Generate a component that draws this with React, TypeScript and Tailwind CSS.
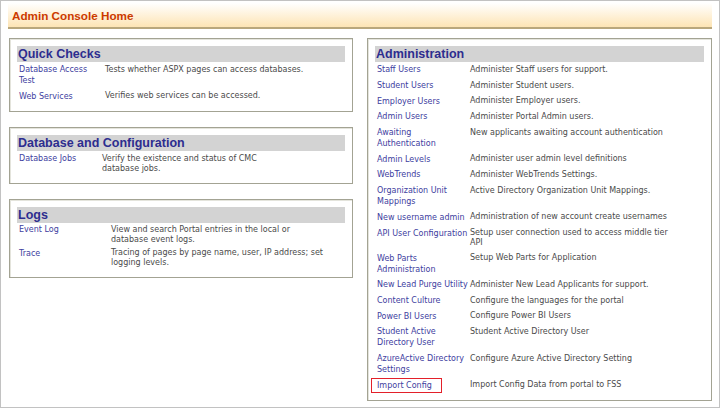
import React from "react";

type Row = { link: React.ReactNode; desc: React.ReactNode; boxed?: boolean };

const quickChecks: Row[] = [
  { link: <>Database Access<br />Test</>, desc: "Tests whether ASPX pages can access databases." },
  { link: "Web Services", desc: "Verifies web services can be accessed." },
];

const dbConfig: Row[] = [
  { link: "Database Jobs", desc: <>Verify the existence and status of CMC<br />database jobs.</> },
];

const logs: Row[] = [
  { link: "Event Log", desc: <>View and search Portal entries in the local or<br />database event logs.</> },
  { link: "Trace", desc: <>Tracing of pages by page name, user, IP address; set<br />logging levels.</> },
];

const admin: Row[] = [
  { link: "Staff Users", desc: "Administer Staff users for support." },
  { link: "Student Users", desc: "Administer Student users." },
  { link: "Employer Users", desc: "Administer Employer users." },
  { link: "Admin Users", desc: "Administer Portal Admin users." },
  { link: <>Awaiting<br />Authentication</>, desc: "New applicants awaiting account authentication" },
  { link: "Admin Levels", desc: "Administer user admin level definitions" },
  { link: "WebTrends", desc: "Administer WebTrends Settings." },
  { link: <>Organization Unit<br />Mappings</>, desc: "Active Directory Organization Unit Mappings." },
  { link: "New username admin", desc: "Administration of new account create usernames" },
  { link: "API User Configuration", desc: <>Setup user connection used to access middle tier<br />API</> },
  { link: <>Web Parts<br />Administration</>, desc: "Setup Web Parts for Application" },
  { link: "New Lead Purge Utility", desc: "Administer New Lead Applicants for support." },
  { link: "Content Culture", desc: "Configure the languages for the portal" },
  { link: "Power BI Users", desc: "Configure Power BI Users" },
  { link: <>Student Active<br />Directory User</>, desc: "Student Active Directory User" },
  { link: <>AzureActive Directory<br />Settings</>, desc: "Configure Azure Active Directory Setting" },
  { link: "Import Config", desc: "Import Config Data from portal to FSS", boxed: true },
];

function Panel({ title, rows, linkW, pad }: { title: string; rows: Row[]; linkW: string; pad: string }) {
  return (
    <div className="border border-[#a3a393] shadow-[inset_1px_1px_0_#e4e4dc] bg-white p-[7px]">
      <div className="h-[16px] bg-[#d3d3d3] pl-[1px] text-[12.5px] leading-[16px] font-bold text-[#2d2d8f] font-['Liberation_Sans',Arial,sans-serif]">
        {title}
      </div>
      <div className="font-['DejaVu_Sans',Verdana,sans-serif] text-[8px]">
        {rows.map((r, i) => (
          <div key={i} className={`flex ${pad}`}>
            <div className={`${linkW} shrink-0 pl-[2px] leading-[11px] text-[#4040a0] whitespace-nowrap`}>
              {r.boxed ? (
                <span className="inline-block -ml-[6px] -my-[2px] border border-[#e3202a] pl-[5px] pr-[9px] py-[1px]">{r.link}</span>
              ) : (
                r.link
              )}
            </div>
            <div className="leading-[10px] pt-[0.5px] text-[#4a4a4a]">{r.desc}</div>
          </div>
        ))}
      </div>
    </div>
  );
}

export default function App() {
  return (
    <div className="w-[720px] h-[408px] border border-[#c2c2c2] bg-white px-[7px] pt-[2px] overflow-hidden">
      <div className="h-[26px] bg-gradient-to-b from-white to-[#fde4b4] border-b-2 border-[#b9a77c] flex items-center pl-[4px] pt-[1px]">
        <span className="text-[11.7px] font-bold text-[#cc3a00] font-['Liberation_Sans',Arial,sans-serif]">Admin Console Home</span>
      </div>
      <div className="mt-[9px] pl-[1px] grid grid-cols-[344px_345px] gap-x-[14px] items-start">
        <div className="flex flex-col gap-[15px]">
          <Panel title="Quick Checks" rows={quickChecks} linkW="w-[88px]" pad="py-[2.25px]" />
          <Panel title="Database and Configuration" rows={dbConfig} linkW="w-[85px]" pad="py-[2px]" />
          <Panel title="Logs" rows={logs} linkW="w-[94px]" pad="py-[1.5px]" />
        </div>
        <Panel title="Administration" rows={admin} linkW="w-[95px]" pad="py-[2.35px]" />
      </div>
    </div>
  );
}
